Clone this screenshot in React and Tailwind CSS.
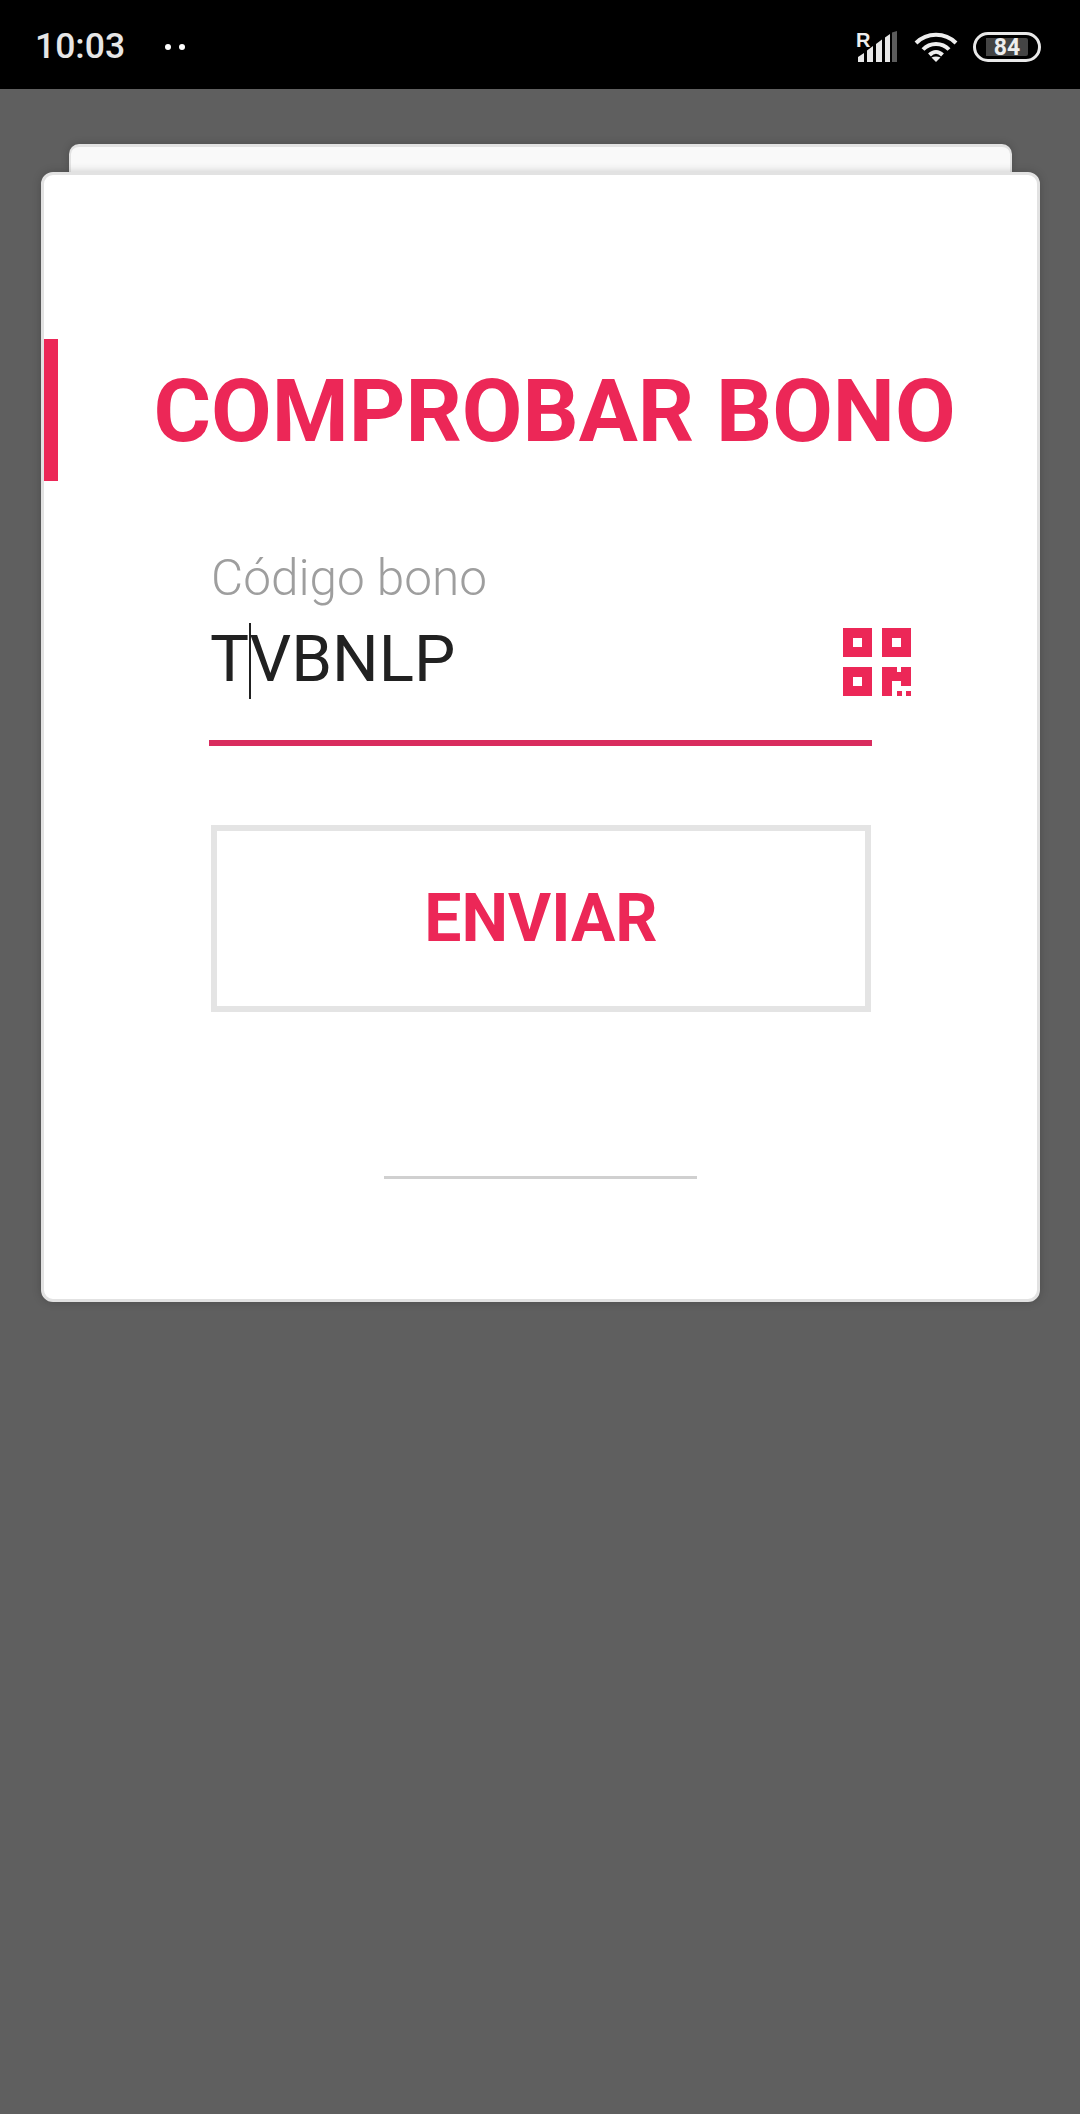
function SignalIcon() {
  return (
    <svg width="42" height="32" viewBox="0 0 42 32" className="block">
      <path d="M1 31v-5l6-4v9z" fill="#e8e8e8" />
      <path d="M10 31V19.500l6-4.500v16z" fill="#e8e8e8" />
      <path d="M19 31V13l6-4.500V31z" fill="#e8e8e8" />
      <path d="M28 31V6.500L33 3v28z" fill="#e8e8e8" />
      <path d="M35 31V1.500l5-1.500v31z" fill="#5c5c5c" />
    </svg>
  );
}

function WifiIcon() {
  return (
    <svg width="44" height="32" viewBox="0 0 44 32" className="block" fill="none" stroke="#eeeeee" strokeWidth="4">
      <path d="M2 12 C13 1 31 1 42 12" />
      <path d="M9 18.500 C16 11 28 11 35 18.500" />
      <path d="M15.500 24 C19.500 20 24.500 20 28.500 24" />
      <path d="M22 31 L17.500 26.500 C20 25 24 25 26.500 26.500 Z" fill="#eeeeee" stroke="none" />
    </svg>
  );
}

function QrIcon() {
  return (
    <svg width="68" height="68" viewBox="0 0 68 68" className="block" fill="#ec2757">
      <path fillRule="evenodd" d="M0 0h29v29H0zM10 10v9h9v-9z" />
      <path fillRule="evenodd" d="M39 0h29v29H39zM49 10v9h9v-9z" />
      <path fillRule="evenodd" d="M0 39h29v29H0zM10 49v9h9v-9z" />
      <path d="M39 39h15v5h4v-5h10v19H58v-5h-9v15H39z" />
      <path d="M54 63h5v5h-5zM63 63h5v5h-5z" />
    </svg>
  );
}

export default function App() {
  return (
    <div className="flex min-h-[2114px] flex-col bg-[#5f5f5f] font-['Roboto',sans-serif]">
      <div className="flex h-[89px] items-center justify-between bg-black pl-[35px] pr-[39px] pt-[5px]">
        <div className="flex items-center">
          <span className="text-[35.500px] font-medium text-[#e6e6e6]">10:03</span>
          <span className="ml-[40px] flex gap-[8px]">
            <span className="h-[6px] w-[6px] rounded-full bg-white" />
            <span className="h-[6px] w-[6px] rounded-full bg-white" />
          </span>
        </div>
        <div className="flex items-center">
          <div className="relative">
            <span className="absolute left-[-1px] top-[-1px] font-['Liberation_Sans',sans-serif] text-[20px] font-bold leading-none text-[#eeeeee]">R</span>
            <SignalIcon />
          </div>
          <div className="ml-[15px]">
            <WifiIcon />
          </div>
          <div className="ml-[15px] flex h-[30px] w-[68px] items-center rounded-full border-[3px] border-[#e8e8e8] pl-[10px] pr-[6px]">
            <div className="flex h-[18px] w-[42px] items-center justify-center rounded-r-[2px] bg-[#444444] text-[23px] font-bold leading-none text-[#eeeeee]">84</div>
          </div>
        </div>
      </div>

      <div className="ml-[69px] mr-[68px] mt-[55px] h-[28px] rounded-t-[10px] border-x-[2px] border-t-[3px] border-[#e2e2e2] bg-[#f9f9f9] shadow-[0_0_8px_rgba(0,0,0,0.2)]" />

      <div className="relative ml-[41px] mr-[40px] h-[1130px] rounded-[12px] border-[3px] border-[#e2e2e2] bg-white shadow-[0_0_10px_rgba(0,0,0,0.2)]">
        <div className="absolute left-0 top-[164px] h-[142px] w-[14px] bg-[#ec2757]" />

        <div className="flex flex-col items-center">
          <h1 className="ml-[28px] mt-[186px] text-[88px] font-bold leading-[100px] text-[#ec2757]">COMPROBAR BONO</h1>

          <div className="ml-[165px] mt-[88px] w-[663px] self-start">
            <div className="pl-[2px] text-[49.500px] font-light leading-[58px] text-[#9e9e9e]">Código bono</div>
            <div className="relative mt-[8px] flex h-[88px] items-center justify-between">
              <div className="relative pl-[1px] text-[65.500px] font-normal leading-[76px] text-[#212121]">
                TVBNLP
                <span className="absolute left-[40px] top-[2px] h-[76px] w-[2px] bg-[#212121]" />
              </div>
              <div className="absolute left-[634px] top-[13px]">
                <QrIcon />
              </div>
            </div>
            <div className="mt-[37px] h-[6px] bg-[#d92c5e]" />
          </div>

          <div className="ml-[1px] mt-[79px] flex h-[187px] w-[660px] items-center justify-center border-[6px] border-[#e4e4e4] text-[66px] font-bold text-[#ec2757]">
            ENVIAR
          </div>

          <div className="ml-[-1px] mt-[164px] h-[3px] w-[313px] bg-[#d0d0d0]" />
        </div>
      </div>
    </div>
  );
}
